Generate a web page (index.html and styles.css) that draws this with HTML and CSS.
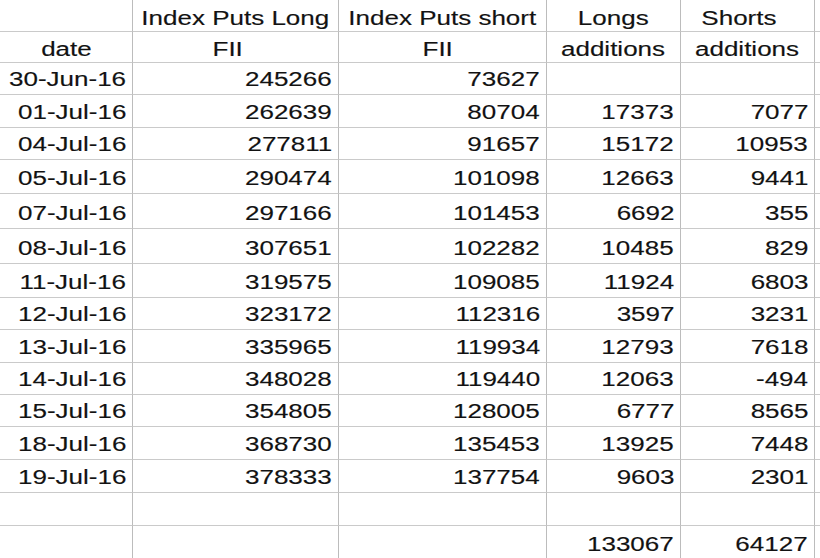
FILE: index.html
```html
<!DOCTYPE html>
<html>
<head>
<meta charset="utf-8">
<link rel="stylesheet" href="styles.css">
</head>
<body>
<div class="sheet">
  <div class="c"></div><div class="c ctr"><span class="t">Index Puts Long</span></div><div class="c ctr"><span class="t">Index Puts short</span></div><div class="c ctr"><span class="t">Longs</span></div><div class="c ctr"><span class="t sh">Shorts</span></div><div class="c e"></div>
  <div class="c ctr"><span class="t">date</span></div><div class="c ctr"><span class="t f1">FII</span></div><div class="c ctr"><span class="t f2">FII</span></div><div class="c ctr"><span class="t">additions</span></div><div class="c ctr"><span class="t">additions</span></div><div class="c e"></div>
  <div class="c num"><span class="t">30-Jun-16</span></div><div class="c num"><span class="t">245266</span></div><div class="c num"><span class="t">73627</span></div><div class="c num"></div><div class="c num"></div><div class="c e"></div>
  <div class="c num"><span class="t">01-Jul-16</span></div><div class="c num"><span class="t">262639</span></div><div class="c num"><span class="t">80704</span></div><div class="c num"><span class="t">17373</span></div><div class="c num"><span class="t">7077</span></div><div class="c e"></div>
  <div class="c num"><span class="t">04-Jul-16</span></div><div class="c num"><span class="t">277811</span></div><div class="c num"><span class="t">91657</span></div><div class="c num"><span class="t">15172</span></div><div class="c num"><span class="t">10953</span></div><div class="c e"></div>
  <div class="c num"><span class="t">05-Jul-16</span></div><div class="c num"><span class="t">290474</span></div><div class="c num"><span class="t">101098</span></div><div class="c num"><span class="t">12663</span></div><div class="c num"><span class="t">9441</span></div><div class="c e"></div>
  <div class="c num"><span class="t">07-Jul-16</span></div><div class="c num"><span class="t">297166</span></div><div class="c num"><span class="t">101453</span></div><div class="c num"><span class="t">6692</span></div><div class="c num"><span class="t">355</span></div><div class="c e"></div>
  <div class="c num"><span class="t">08-Jul-16</span></div><div class="c num"><span class="t">307651</span></div><div class="c num"><span class="t">102282</span></div><div class="c num"><span class="t">10485</span></div><div class="c num"><span class="t">829</span></div><div class="c e"></div>
  <div class="c num"><span class="t">11-Jul-16</span></div><div class="c num"><span class="t">319575</span></div><div class="c num"><span class="t">109085</span></div><div class="c num"><span class="t">11924</span></div><div class="c num"><span class="t">6803</span></div><div class="c e"></div>
  <div class="c num"><span class="t">12-Jul-16</span></div><div class="c num"><span class="t">323172</span></div><div class="c num"><span class="t">112316</span></div><div class="c num"><span class="t">3597</span></div><div class="c num"><span class="t">3231</span></div><div class="c e"></div>
  <div class="c num"><span class="t">13-Jul-16</span></div><div class="c num"><span class="t">335965</span></div><div class="c num"><span class="t">119934</span></div><div class="c num"><span class="t">12793</span></div><div class="c num"><span class="t">7618</span></div><div class="c e"></div>
  <div class="c num"><span class="t">14-Jul-16</span></div><div class="c num"><span class="t">348028</span></div><div class="c num"><span class="t">119440</span></div><div class="c num"><span class="t">12063</span></div><div class="c num"><span class="t">-494</span></div><div class="c e"></div>
  <div class="c num"><span class="t">15-Jul-16</span></div><div class="c num"><span class="t">354805</span></div><div class="c num"><span class="t">128005</span></div><div class="c num"><span class="t">6777</span></div><div class="c num"><span class="t">8565</span></div><div class="c e"></div>
  <div class="c num"><span class="t">18-Jul-16</span></div><div class="c num"><span class="t">368730</span></div><div class="c num"><span class="t">135453</span></div><div class="c num"><span class="t">13925</span></div><div class="c num"><span class="t">7448</span></div><div class="c e"></div>
  <div class="c num"><span class="t">19-Jul-16</span></div><div class="c num"><span class="t">378333</span></div><div class="c num"><span class="t">137754</span></div><div class="c num"><span class="t">9603</span></div><div class="c num"><span class="t">2301</span></div><div class="c e"></div>
  <div class="c num"></div><div class="c num"></div><div class="c num"></div><div class="c num"></div><div class="c num"></div><div class="c e"></div>
  <div class="c num last"></div><div class="c num last"></div><div class="c num last"></div><div class="c num last"><span class="t">133067</span></div><div class="c num last"><span class="t">64127</span></div><div class="c e last"></div>
</div>
</body>
</html>
```
FILE: styles.css
```css
html, body {
  margin: 0;
  padding: 0;
  background: #ffffff;
}

body {
  width: 820px;
  height: 558px;
  overflow: hidden;
  font-family: "Liberation Sans", Arial, sans-serif;
  font-size: 20px;
  color: #121212;
}

.sheet {
  display: grid;
  grid-template-columns: 133px 206px 208px 134px 134px 5px;
  grid-template-rows: 32px 31px 32px 33px 32px 34px 35px 35px 34px 32px 33px 32px 32px 33px 33px 33px 33px;
}

.c {
  box-sizing: border-box;
  border-right: 1px solid #bcbcbc;
  border-bottom: 1px solid #cacaca;
  display: flex;
  align-items: flex-end;
  justify-content: flex-end;
  padding: 0 6px 5px 0;
  white-space: nowrap;
  overflow: visible;
}

.c.e {
  border-right: none;
  padding: 0;
}

.c.last {
  border-bottom: none;
}

.c.ctr {
  justify-content: center;
  padding-right: 0;
  padding-bottom: 3px;
}

.t {
  display: inline-block;
  line-height: 20px;
  -webkit-text-stroke: 0.15px #121212;
  transform: scaleX(1.3);
  transform-origin: right bottom;
}

.ctr .t {
  transform-origin: center bottom;
}

.t.f1 {
  margin-right: 16px;
}

.t.f2 {
  margin-right: 10px;
}

.t.sh {
  margin-right: 18px;
}
```
